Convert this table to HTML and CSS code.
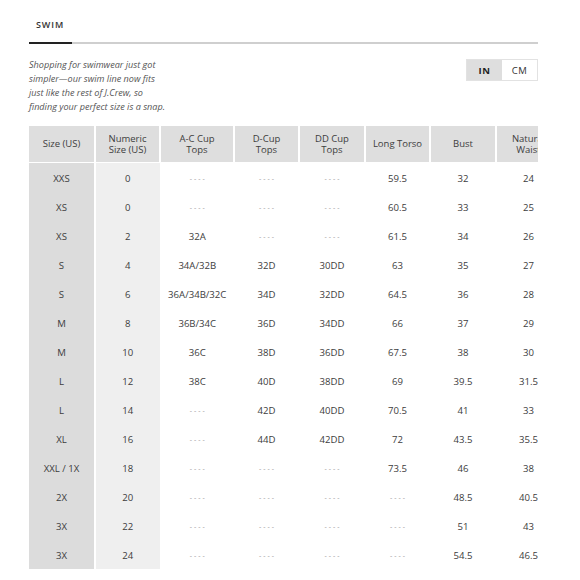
FILE: index.html
```html
<!DOCTYPE html>
<html>
<head>
<meta charset="utf-8">
<link rel="stylesheet" href="styles.css">
</head>
<body>
<div class="page">
  <div class="tabs"><div class="tab">SWIM</div></div>
  <div class="intro">
    <p class="desc">Shopping for swimwear just got<br>simpler—our swim line now fits<br>just like the rest of J.Crew, so<br>finding your perfect size is a snap.</p>
    <div class="toggle"><span class="unit active">IN</span><span class="unit">CM</span></div>
  </div>
  <div class="table-wrap">
    <table class="chart">
      <colgroup>
        <col class="c1"><col class="c2"><col class="c3"><col class="c4"><col class="c5"><col class="c6"><col class="c7"><col class="c8">
      </colgroup>
      <thead>
        <tr>
          <th>Size (US)</th><th>Numeric<br>Size (US)</th><th>A-C Cup<br>Tops</th><th>D-Cup<br>Tops</th><th>DD Cup<br>Tops</th><th>Long Torso</th><th>Bust</th><th>Natural<br>Waist</th>
        </tr>
      </thead>
      <tbody>
        <tr><td class="s">XXS</td><td class="n">0</td><td class="d">----</td><td class="d">----</td><td class="d">----</td><td>59.5</td><td>32</td><td>24</td></tr>
        <tr><td class="s">XS</td><td class="n">0</td><td class="d">----</td><td class="d">----</td><td class="d">----</td><td>60.5</td><td>33</td><td>25</td></tr>
        <tr><td class="s">XS</td><td class="n">2</td><td>32A</td><td class="d">----</td><td class="d">----</td><td>61.5</td><td>34</td><td>26</td></tr>
        <tr><td class="s">S</td><td class="n">4</td><td>34A/32B</td><td>32D</td><td>30DD</td><td>63</td><td>35</td><td>27</td></tr>
        <tr><td class="s">S</td><td class="n">6</td><td>36A/34B/32C</td><td>34D</td><td>32DD</td><td>64.5</td><td>36</td><td>28</td></tr>
        <tr><td class="s">M</td><td class="n">8</td><td>36B/34C</td><td>36D</td><td>34DD</td><td>66</td><td>37</td><td>29</td></tr>
        <tr><td class="s">M</td><td class="n">10</td><td>36C</td><td>38D</td><td>36DD</td><td>67.5</td><td>38</td><td>30</td></tr>
        <tr><td class="s">L</td><td class="n">12</td><td>38C</td><td>40D</td><td>38DD</td><td>69</td><td>39.5</td><td>31.5</td></tr>
        <tr><td class="s">L</td><td class="n">14</td><td class="d">----</td><td>42D</td><td>40DD</td><td>70.5</td><td>41</td><td>33</td></tr>
        <tr><td class="s">XL</td><td class="n">16</td><td class="d">----</td><td>44D</td><td>42DD</td><td>72</td><td>43.5</td><td>35.5</td></tr>
        <tr><td class="s">XXL / 1X</td><td class="n">18</td><td class="d">----</td><td class="d">----</td><td class="d">----</td><td>73.5</td><td>46</td><td>38</td></tr>
        <tr><td class="s">2X</td><td class="n">20</td><td class="d">----</td><td class="d">----</td><td class="d">----</td><td class="d">----</td><td>48.5</td><td>40.5</td></tr>
        <tr><td class="s">3X</td><td class="n">22</td><td class="d">----</td><td class="d">----</td><td class="d">----</td><td class="d">----</td><td>51</td><td>43</td></tr>
        <tr><td class="s">3X</td><td class="n">24</td><td class="d">----</td><td class="d">----</td><td class="d">----</td><td class="d">----</td><td>54.5</td><td>46.5</td></tr>
      </tbody>
    </table>
  </div>
</div>
</body>
</html>
```
FILE: styles.css
```css
html, body {
  margin: 0;
  padding: 0;
  background: #fff;
}
body {
  font-family: "Open Sans", "Noto Sans", sans-serif;
  color: #333;
}
.page {
  width: 509px;
  margin-left: 29px;
}
.tabs {
  height: 42px;
  border-bottom: 2px solid #cfcfcf;
  display: flex;
  align-items: flex-end;
}
.tab {
  width: 36px;
  padding-left: 7px;
  padding-bottom: 11px;
  margin-bottom: -2px;
  border-bottom: 2px solid #222;
  font-size: 9px;
  font-weight: 600;
  letter-spacing: 0.9px;
  color: #333;
  line-height: 12px;
  white-space: nowrap;
}
.intro {
  display: flex;
  justify-content: space-between;
  align-items: flex-start;
  margin-top: 14px;
}
.desc {
  margin: 0;
  font-style: italic;
  font-size: 9.1px;
  line-height: 14px;
  color: #555;
}
.toggle {
  display: flex;
  margin-top: 1px;
  border: 1px solid #e2e2e2;
  height: 20px;
}
.unit {
  width: 35px;
  display: flex;
  align-items: center;
  justify-content: center;
  font-size: 9.5px;
  color: #333;
  letter-spacing: 0.5px;
}
.unit.active {
  background: #dedede;
  font-weight: 700;
  color: #222;
}
.table-wrap {
  margin-top: 12px;
  width: 509px;
  overflow: hidden;
}
.chart {
  table-layout: fixed;
  border-collapse: collapse;
  width: 532px;
}
.c1 { width: 66px; }
.c2 { width: 65px; }
.c3 { width: 74px; }
.c4 { width: 65px; }
.c5 { width: 66px; }
.c6 { width: 65px; }
.c7 { width: 66px; }
.c8 { width: 65px; }
.chart th {
  background: #dedede;
  height: 36px;
  padding: 0;
  border-right: 2px solid #fff;
  border-bottom: 1px solid #fff;
  font-weight: 400;
  font-size: 9.5px;
  line-height: 11.5px;
  color: #3d3d3d;
  text-align: center;
  vertical-align: middle;
  white-space: nowrap;
}
.chart td {
  height: 28px;
  padding: 1px 0 0;
  text-align: center;
  vertical-align: middle;
  font-size: 9.6px;
  color: #3d3d3d;
  white-space: nowrap;
}
.chart td.s {
  background: #dcdcdc;
  border-right: 2px solid #fff;
}
.chart td.n {
  background: #efefef;
  border-right: 1px solid #fff;
}
.chart td.d {
  color: #9a9a9a;
  font-size: 7px;
  letter-spacing: 2px;
  text-indent: 2px;
}
```
